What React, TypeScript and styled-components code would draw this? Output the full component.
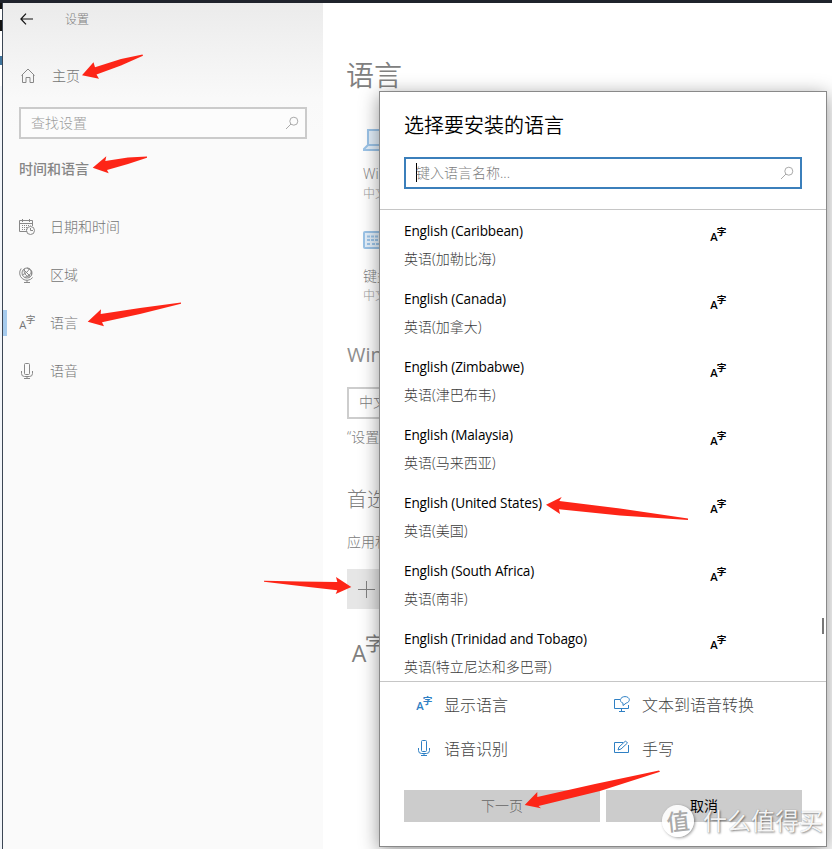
import type { ReactNode } from 'react'
import styled, { createGlobalStyle } from 'styled-components'

const GlobalStyle = createGlobalStyle`
  * {
    box-sizing: border-box;
  }
  body {
    margin: 0;
    overflow: hidden;
    font-family: 'Open Sans', 'Noto Sans CJK SC', sans-serif;
    font-size: 14px;
  }
`
const Desktop = styled.div`
  position: relative;
  display: flex;
  width: 832px;
  height: 849px;
  overflow: hidden;
  background: #fff;
  border-top: 3px solid #1f232c;
`
const Edge = styled.div`
  flex: none;
  width: 3px;
  border-right: 1px solid #3c4654;
  background: linear-gradient(#111 0 6px, #fff 6px 17px, #111 17px 28px, #fff 28px 53px, #40749c 53px 62px, #fff 62px 83px, #f2f5f9 83px);
`
const Sidebar = styled.aside`
  flex: none;
  width: 320px;
  background: linear-gradient(#ebebeb, #f1f1f1 40px, #f9f9f9 95px, #fafafa 130px);
  color: #808080;
  font-weight: 300;
`
const TitleBar = styled.header`
  display: flex;
  align-items: center;
  gap: 32px;
  height: 32px;
  padding-left: 17px;
  font-size: 12px;
`
const NavItem = styled.div<{ $active?: boolean }>`
  display: flex;
  align-items: center;
  gap: 15px;
  height: 48px;
  padding-left: 12px;
  line-height: 20px;
  border-left: 4px solid transparent;
  border-image: ${p => p.$active ? 'linear-gradient(transparent 12px, #a6cbed 12px 36px, transparent 36px) 1 / 0 0 0 4px' : 'none'};
  color: #757575;
  svg {
    color: #888;
  }
`
const HomeItem = styled(NavItem)`
  margin-top: 17px;
  padding-left: 13px;
  gap: 16px;
`
const SearchBox = styled.div<{ $focus?: boolean }>`
  display: flex;
  align-items: center;
  justify-content: space-between;
  height: 32px;
  padding: 0 6px 2px 10px;
  border: 2px solid ${p => p.$focus ? '#3b7fbb' : '#cbcbcb'};
  background: ${p => p.$focus ? '#fff' : '#fcfcfc'};
  color: ${p => p.$focus ? '#7c7c7c' : '#9c9c9c'};
  font-weight: 300;
  svg {
    margin-top: 2px;
    color: #aaa;
  }
`
const SideSearch = styled.div`
  padding: 7px 16px 0;
`
const SideHeading = styled.h2`
  margin: 20px 0 24px 16px;
  font-size: 14px;
  line-height: 20px;
  font-weight: 500;
  color: #868686;
`
const Main = styled.main`
  width: 440px;
  padding: 52px 0 0 24px;
  color: #808080;
  font-weight: 300;
  white-space: nowrap;
`
const PageTitle = styled.h1`
  margin: 0 0 0 -1px;
  font-size: 28px;
  line-height: 40px;
  font-weight: 350;
`
const Tile = styled.div`
  display: flex;
  flex-direction: column;
  height: 102px;
  padding-left: 16px;
`
const Tiles = styled.div`
  padding-top: 29px;
`
const TileIcon = styled.div`
  height: 40px;
`
const TileName = styled.div`
  line-height: 20px;
`
const TileNote = styled.div`
  font-size: 12px;
  line-height: 19px;
  color: #9c9c9c;
`
const SectionTitle = styled.h2`
  margin: 0;
  font-size: 20px;
  line-height: 28px;
  font-weight: 300;
`
const WindowsTitle = styled(SectionTitle)`
  margin-top: 13px;
  font-weight: 400;
  color: #8e8e8e;
`
const Select = styled.div`
  height: 32px;
  margin-top: 18px;
  padding-left: 10px;
  border: 2px solid #cdcdcd;
  line-height: 26px;
`
const Note = styled.p`
  margin: 8px 0 0;
  height: 59px;
  line-height: 20px;
`
const Hint = styled.p`
  margin: 18px 0 17px;
  line-height: 20px;
`
const AddButton = styled.div`
  display: flex;
  align-items: center;
  height: 40px;
  padding-left: 11px;
  background: #e6e6e6;
`
const Installed = styled.div`
  padding: 24px 0 0 4px;
`
const Dialog = styled.section`
  position: absolute;
  left: 379px;
  top: 88px;
  display: flex;
  flex-direction: column;
  width: 448px;
  height: 756px;
  background: #fff;
  border: 1px solid #898989;
  box-shadow: 0 4px 18px rgba(0, 0, 0, 0.42);
`
const DialogHead = styled.header`
  height: 118px;
  padding: 20px 24px 0;
  border-bottom: 1px solid #c6c6c6;
`
const DialogTitle = styled.h2`
  margin: 0 0 17px;
  font-size: 20px;
  line-height: 28px;
  font-weight: 350;
  color: #000;
`
const Caret = styled.i`
  display: inline-block;
  width: 1px;
  height: 19px;
  margin-right: -1px;
  vertical-align: -4px;
  background: #000;
`
const List = styled.div`
  position: relative;
  height: 472px;
  overflow: hidden;
  border-bottom: 1px solid #c6c6c6;
`
const Row = styled.div`
  display: flex;
  justify-content: space-between;
  height: 68px;
  padding: 11px 100px 0 24px;
`
const Native = styled.div`
  font-size: 13.6px;
  line-height: 20px;
  letter-spacing: -0.15px;
  color: #000;
`
const Local = styled.div`
  margin-top: 8px;
  line-height: 20px;
  font-weight: 300;
  color: #3c3c3c;
`
const RowIcon = styled.div`
  padding-top: 6px;
  color: #000;
`
const Thumb = styled.div`
  position: absolute;
  right: 2px;
  top: 408px;
  width: 2px;
  height: 16px;
  background: #777;
`
const Features = styled.div`
  display: grid;
  grid-template-columns: 198px 1fr;
  grid-auto-rows: 44px;
  padding-left: 36px;
`
const Feature = styled.div`
  display: flex;
  align-items: center;
  gap: 12px;
  font-size: 16px;
  font-weight: 300;
  color: #444;
  svg {
    color: #2f80c4;
  }
`
const Buttons = styled.footer`
  display: grid;
  grid-template-columns: 1fr 1fr;
  gap: 6px;
  padding: 20px 24px 0;
`
const Button = styled.button<{ $disabled?: boolean }>`
  height: 32px;
  padding: 0 0 2px;
  border: 0;
  background: #ccc;
  font: inherit;
  font-weight: ${p => p.$disabled ? 300 : 400};
  color: ${p => p.$disabled ? '#666' : '#000'};
`
const Glyphs = styled.span<{ $size: number; $weight: number }>`
  display: flex;
  flex: none;
  width: ${p => p.$size}px;
  height: ${p => p.$size}px;
  font-size: ${p => p.$size * 0.7}px;
  font-weight: ${p => p.$weight};
  line-height: 1;
`
const Latin = styled.span`
  width: 42%;
  margin-top: 28%;
  font-family: 'Open Sans', sans-serif;
  text-indent: 0.03em;
`
const Hanzi = styled.span`
  font-family: 'Noto Sans CJK SC', sans-serif;
  font-size: 0.86em;
`
const BlueGlyphs = styled.span`
  color: #2f80c4;
`
const Arrows = styled.svg`
  position: absolute;
  left: 0;
  top: -3px;
  fill: #fd2517;
`
const Watermark = styled.div`
  position: absolute;
  left: 662px;
  top: 801px;
  display: flex;
  align-items: center;
  gap: 9px;
  height: 34px;
  color: rgba(255, 255, 255, 0.92);
  font-size: 24px;
  line-height: 34px;
  white-space: nowrap;
  text-shadow: 1px 1px 2px rgba(0, 0, 0, 0.45), 0 0 1px rgba(0, 0, 0, 0.25);
`
const Seal = styled.span`
  display: flex;
  align-items: center;
  justify-content: center;
  width: 32px;
  height: 32px;
  border-radius: 50%;
  background: rgba(255, 255, 255, 0.9);
  box-shadow: 1px 1px 3px rgba(0, 0, 0, 0.4);
  color: #aaa;
  font-size: 23px;
  font-weight: 500;
  text-shadow: none;
  transform: rotate(-6deg);
`

const Icon = ({ w = 16, h = 16, children }: { w?: number; h?: number; children: ReactNode }) => (
  <svg width={w} height={h} viewBox={`0 0 ${w} ${h}`} fill="none" stroke="currentColor" strokeWidth="1">
    {children}
  </svg>
)

const LangIcon = ({ size = 16, weight = 600 }: { size?: number; weight?: number }) => (
  <Glyphs $size={size} $weight={weight}>
    <Latin>A</Latin>
    <Hanzi>字</Hanzi>
  </Glyphs>
)

const MicIcon = () => (
  <Icon>
    <rect x="5.5" y="0.5" width="5" height="11" rx="1" />
    <path d="M2.5 8v2.5a3 3 0 0 0 3 3h5a3 3 0 0 0 3-3V8M8 13.5v2M5 15.5h6" />
  </Icon>
)

const SearchIcon = () => (
  <Icon w={14} h={14}>
    <circle cx="8.8" cy="5.2" r="4" />
    <path d="M6 8 1 13" />
  </Icon>
)

const DateIcon = () => (
  <Icon>
    <path d="M8 12.5H.5v-11h13V7M.5 4.5h13M3.5 0v3M10.5 0v3" />
    <path d="M3 6.5h8.5M3 8.5h6M3 10.5h5" strokeDasharray="1 1" />
    <circle cx="11.5" cy="11.5" r="4" />
    <path d="M11.5 9v2.5H14" />
  </Icon>
)

const RegionIcon = () => (
  <Icon>
    <circle cx="8" cy="6" r="5" />
    <path d="M2.2 1.5a7.3 7.3 0 0 0 11.5 9M4.5 2.5l7 7M3.5 7.8C6 7 9.5 4.2 10.3 1.7M5.7 10.3C8.5 10 12 7.4 12.7 4.2M5.5 1.8C4 5 7 10 11 10M8 1c3 .7 5.2 4 4.3 7.3M8 13v2.5M5 15.5h6" />
  </Icon>
)

const languages = [
  ['English (Caribbean)', '英语(加勒比海)'],
  ['English (Canada)', '英语(加拿大)'],
  ['English (Zimbabwe)', '英语(津巴布韦)'],
  ['English (Malaysia)', '英语(马来西亚)'],
  ['English (United States)', '英语(美国)'],
  ['English (South Africa)', '英语(南非)'],
  ['English (Trinidad and Tobago)', '英语(特立尼达和多巴哥)'],
]

const arrows = [
  '82,75.3 93.5,62.3 95,67.3 121,59 142.5,54.5 143,55.7 121,65.5 96.5,74.5 99,78.7',
  '92.7,167.7 106.3,156.3 105.3,161 128,157.5 147,156.5 147,157.8 128,164 107,170 108.7,173.3',
  '87.7,321.7 101,309.3 100.7,314 140,308 181,302.5 181,303.8 140,314 102,322.2 104,326.3',
  '351.3,587 336,577 337.3,582 300,581.5 264,580.7 264,581.8 300,586 337.3,590.3 335.7,594',
  '546,504.7 561.7,497 559.3,501 620,508.5 688,518.6 688,520 620,515.5 559,509.3 560,514',
  '524.7,805 537.3,792 537.3,797 595,784 659,770.5 660,771.7 600,791 538.5,806 541,808.3',
]

const App = () => (
  <>
    <GlobalStyle />
    <Desktop>
      <Edge />
      <Sidebar>
        <TitleBar>
          <svg width="13" height="12" viewBox="0 0 13 12" fill="none" stroke="#111" strokeWidth="1.2">
            <path d="M13 6H1M6 .7.9 6 6 11.3" />
          </svg>
          设置
        </TitleBar>
        <HomeItem>
          <Icon>
            <path d="M1.5 7.5 8 1l6.5 6.5M2.5 6.500v8h3.500v-5h4v5h3.500v-8" />
          </Icon>
          主页
        </HomeItem>
        <SideSearch>
          <SearchBox>查找设置<SearchIcon /></SearchBox>
        </SideSearch>
        <SideHeading>时间和语言</SideHeading>
        <NavItem><DateIcon />日期和时间</NavItem>
        <NavItem><RegionIcon />区域</NavItem>
        <NavItem $active><LangIcon weight={400} />语言</NavItem>
        <NavItem><MicIcon />语音</NavItem>
      </Sidebar>
      <Main>
        <PageTitle>语言</PageTitle>
        <Tiles>
          <Tile>
            <TileIcon>
              <svg width="32" height="32" viewBox="0 0 32 32" fill="#e4f0fb" stroke="#9cc4e8" strokeWidth="2">
                <path d="M5 6h22v15H5zM5 21l-4 4v1h30v-1l-4-4z" />
              </svg>
            </TileIcon>
            <TileName>Windows</TileName>
            <TileNote>中文</TileNote>
          </Tile>
          <Tile>
            <TileIcon>
              <svg width="32" height="32" viewBox="0 0 32 32" fill="#e4f0fb" stroke="#9cc4e8" strokeWidth="2">
                <rect x="1" y="6" width="30" height="16" rx="1" />
                <path d="M4 10.500h24M4 14h24M4 18h3M9 18h14" strokeDasharray="3 1" />
              </svg>
            </TileIcon>
            <TileName>键盘</TileName>
            <TileNote>中文</TileNote>
          </Tile>
        </Tiles>
        <WindowsTitle>Windows</WindowsTitle>
        <Select>中文</Select>
        <Note>“设置”</Note>
        <SectionTitle>首选语言</SectionTitle>
        <Hint>应用和</Hint>
        <AddButton>
          <Icon w={17} h={17}><path d="M8.500 0v17M0 8.500h17" /></Icon>
        </AddButton>
        <Installed><LangIcon size={33} weight={400} /></Installed>
      </Main>
      <Dialog>
        <DialogHead>
          <DialogTitle>选择要安装的语言</DialogTitle>
          <SearchBox $focus>
            <span><Caret />键入语言名称...</span>
            <SearchIcon />
          </SearchBox>
        </DialogHead>
        <List>
          {languages.map(([name, local]) => (
            <Row key={name}>
              <div>
                <Native>{name}</Native>
                <Local>{local}</Local>
              </div>
              <RowIcon><LangIcon /></RowIcon>
            </Row>
          ))}
          <Thumb />
        </List>
        <Features>
          <Feature><BlueGlyphs><LangIcon /></BlueGlyphs>显示语言</Feature>
          <Feature>
            <Icon>
              <path d="M6 3.500H.5v9h14V9M7.500 12.500v3M5 15.500h6" />
              <path d="M9 9.500V7.200C4.800 5.800 6 .6 11 .6s6 5.200 1.200 6.500z" />
            </Icon>
            文本到语音转换
          </Feature>
          <Feature><MicIcon />语音识别</Feature>
          <Feature>
            <Icon>
              <path d="M9 2.500H.5v10h14V5M4 10l1-3 6.500-6 2 2L7 9z" />
            </Icon>
            手写
          </Feature>
        </Features>
        <Buttons>
          <Button $disabled>下一页</Button>
          <Button>取消</Button>
        </Buttons>
      </Dialog>
      <Arrows width="832" height="849" viewBox="0 0 832 849">
        {arrows.map(points => <polygon key={points} points={points} />)}
      </Arrows>
      <Watermark><Seal>值</Seal>什么值得买</Watermark>
    </Desktop>
  </>
)

export default App
